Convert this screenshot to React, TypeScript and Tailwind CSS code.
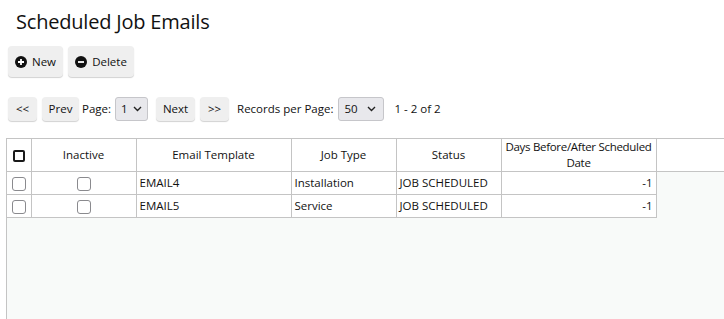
import React from 'react';

const rows = [
  { template: 'EMAIL4', jobType: 'Installation', status: 'JOB SCHEDULED', days: -1 },
  { template: 'EMAIL5', jobType: 'Service', status: 'JOB SCHEDULED', days: -1 },
];

function Box({ header = false }: { header?: boolean }) {
  if (header) {
    return <span className="inline-block w-[12px] h-[12px] border-2 border-[#1a1a1a] rounded-[2px] bg-white align-middle" />;
  }
  return <span className="inline-block w-[14px] h-[14px] border border-[#8a8a8e] rounded-[3px] bg-white align-middle" />;
}

function Chevron() {
  return (
    <svg width="9" height="6" viewBox="0 0 9 6" className="ml-auto">
      <path d="M1 1l3.5 3.5L8 1" fill="none" stroke="#222" strokeWidth="1.4" />
    </svg>
  );
}

const btn = 'h-[24px] flex items-center justify-center rounded-[4px] bg-[#efefef] shadow-[0_1px_1px_rgba(0,0,0,0.18)] text-[#111]';

export default function App() {
  return (
    <div className="w-[724px] h-[319px] overflow-hidden bg-white text-[#111]" style={{ fontFamily: '"Open Sans", "Noto Sans", sans-serif' }}>
      <h1 className="pl-[16px] pt-[8px] text-[20px] leading-[28px] tracking-[-0.2px]">Scheduled Job Emails</h1>

      <div className="flex gap-[5px] pl-[8px] mt-[10px] text-[11.5px]">
        <button className="w-[55px] h-[31px] flex items-center justify-center gap-[5px] rounded-[4px] bg-[#efefef] shadow-[0_1px_1px_rgba(0,0,0,0.18)]">
          <svg width="12" height="12" viewBox="0 0 12 12">
            <circle cx="6" cy="6" r="6" fill="#111" />
            <path d="M6 3v6M3 6h6" stroke="#fff" strokeWidth="1.8" />
          </svg>
          New
        </button>
        <button className="w-[66px] h-[31px] flex items-center justify-center gap-[5px] rounded-[4px] bg-[#efefef] shadow-[0_1px_1px_rgba(0,0,0,0.18)]">
          <svg width="12" height="12" viewBox="0 0 12 12">
            <circle cx="6" cy="6" r="6" fill="#111" />
            <path d="M3 6h6" stroke="#fff" strokeWidth="1.8" />
          </svg>
          Delete
        </button>
      </div>

      <div className="flex items-center pl-[8px] mt-[20px] text-[11.5px]">
        <button className={`${btn} w-[29px]`}>&lt;&lt;</button>
        <button className={`${btn} w-[37px] ml-[5px]`}>Prev</button>
        <span className="ml-[3px]">Page:</span>
        <div className="ml-[4px] h-[24px] w-[33px] flex items-center px-[5px] rounded-[3px] bg-[#e8e8ec] border border-[#c6c6ca]">
          <span>1</span>
          <Chevron />
        </div>
        <button className={`${btn} w-[39px] ml-[8px]`}>Next</button>
        <button className={`${btn} w-[29px] ml-[5px]`}>&gt;&gt;</button>
        <span className="ml-[8px]">Records per Page:</span>
        <div className="ml-[5px] h-[24px] w-[46px] flex items-center px-[5px] pr-[7px] rounded-[3px] bg-[#e8e8ec] border border-[#c6c6ca]">
          <span>50</span>
          <Chevron />
        </div>
        <span className="ml-[10px]">1 - 2 of 2</span>
      </div>

      <div className="ml-[6px] mt-[17px] h-[190px] bg-[#f8faf9] border-l border-[#c4c4c4]">
        <table className="table-fixed border-collapse w-[718px] text-[11.5px]">
          <colgroup>
            <col className="w-[24px]" />
            <col className="w-[105px]" />
            <col className="w-[155px]" />
            <col className="w-[105px]" />
            <col className="w-[105px]" />
            <col className="w-[155px]" />
            <col />
          </colgroup>
          <thead>
            <tr className="h-[33px] bg-white">
              <th className="border border-l-0 border-[#c4c4c4] font-normal text-center"><Box header /></th>
              <th className="border border-[#c4c4c4] font-normal">Inactive</th>
              <th className="border border-[#c4c4c4] font-normal">Email Template</th>
              <th className="border border-[#c4c4c4] font-normal">Job Type</th>
              <th className="border border-[#c4c4c4] font-normal">Status</th>
              <th className="border border-[#c4c4c4] font-normal leading-[16px] tracking-[-0.3px]">Days Before/After Scheduled Date</th>
              <th className="border border-r-0 border-[#c4c4c4]" />
            </tr>
          </thead>
          <tbody>
            {rows.map((r) => (
              <tr key={r.template} className="h-[23px]">
                <td className="border border-l-0 border-[#c4c4c4] bg-white text-center"><Box /></td>
                <td className="border border-[#c4c4c4] bg-white text-center"><Box /></td>
                <td className="border border-[#c4c4c4] bg-white px-[3px]">{r.template}</td>
                <td className="border border-[#c4c4c4] bg-white px-[3px]">{r.jobType}</td>
                <td className="border border-[#c4c4c4] bg-white px-[3px]">{r.status}</td>
                <td className="border border-[#c4c4c4] bg-white px-[3px] text-right">{r.days}</td>
                <td />
              </tr>
            ))}
          </tbody>
        </table>
      </div>
    </div>
  );
}
